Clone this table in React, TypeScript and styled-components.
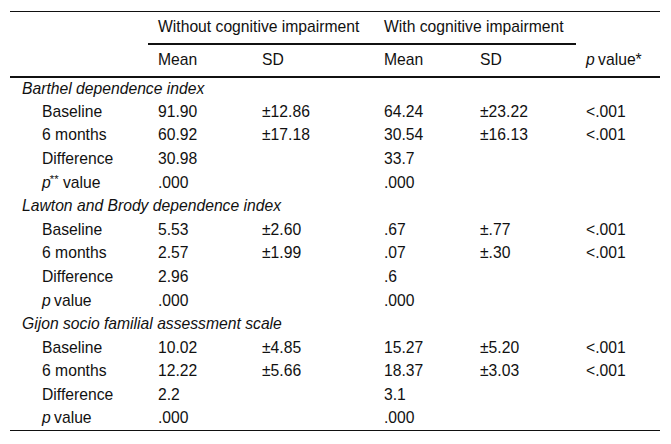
import React from "react";
import styled, { createGlobalStyle } from "styled-components";

const GlobalStyle = createGlobalStyle`
  html, body {
    margin: 0;
    padding: 0;
    background: #fff;
  }
  body {
    font-family: "Liberation Sans", Arial, sans-serif;
    color: #111;
  }
`;

const Page = styled.div`
  padding: 11px 11px 0 10px;
`;

const Table = styled.table`
  width: 650px;
  table-layout: fixed;
  border-collapse: collapse;
  font-size: 15.7px;
  border-top: 1px solid #111;
  border-bottom: 1px solid #111;
`;

const Col = styled.col<{ $width: number }>`
  width: ${(p) => p.$width}px;
`;

const HeadCell = styled.th<{ $underline?: boolean }>`
  font-weight: 400;
  text-align: left;
  padding: 0 0 0 10px;
  white-space: nowrap;
  border-bottom: ${(p) => (p.$underline ? "2px solid #111" : "none")};
`;

const GroupRow = styled.tr`
  height: 32px;
`;

const ColumnRow = styled.tr`
  height: 33px;
  border-bottom: 2px solid #111;
`;

const Row = styled.tr`
  height: 23.6px;
`;

const SectionCell = styled.td`
  font-style: italic;
  padding: 0 0 0 12px;
  white-space: nowrap;
`;

const LabelCell = styled.td`
  padding: 0 0 0 32px;
  white-space: nowrap;
`;

const Cell = styled.td`
  padding: 0 0 0 10px;
  white-space: nowrap;
`;

const Sup = styled.sup`
  font-size: 0.72em;
  vertical-align: 0.45em;
  line-height: 0;
`;

const PLetter = styled.i`
  margin-right: -1px;
`;

type DataRow = {
  label: React.ReactNode;
  values: string[];
};

type Section = {
  title: string;
  rows: DataRow[];
};

const P = () => <PLetter>p</PLetter>;

const pValueLabel = (
  <>
    <P /> value
  </>
);

const sections: Section[] = [
  {
    title: "Barthel dependence index",
    rows: [
      { label: "Baseline", values: ["91.90", "±12.86", "64.24", "±23.22", "<.001"] },
      { label: "6 months", values: ["60.92", "±17.18", "30.54", "±16.13", "<.001"] },
      { label: "Difference", values: ["30.98", "", "33.7", "", ""] },
      {
        label: (
          <>
            <P />
            <Sup>**</Sup> value
          </>
        ),
        values: [".000", "", ".000", "", ""],
      },
    ],
  },
  {
    title: "Lawton and Brody dependence index",
    rows: [
      { label: "Baseline", values: ["5.53", "±2.60", ".67", "±.77", "<.001"] },
      { label: "6 months", values: ["2.57", "±1.99", ".07", "±.30", "<.001"] },
      { label: "Difference", values: ["2.96", "", ".6", "", ""] },
      { label: pValueLabel, values: [".000", "", ".000", "", ""] },
    ],
  },
  {
    title: "Gijon socio familial assessment scale",
    rows: [
      { label: "Baseline", values: ["10.02", "±4.85", "15.27", "±5.20", "<.001"] },
      { label: "6 months", values: ["12.22", "±5.66", "18.37", "±3.03", "<.001"] },
      { label: "Difference", values: ["2.2", "", "3.1", "", ""] },
      { label: pValueLabel, values: [".000", "", ".000", "", ""] },
    ],
  },
];

const widths = [138, 104, 122, 96, 106, 84];

export default function App() {
  return (
    <>
      <GlobalStyle />
      <Page>
        <Table>
          <colgroup>
            {widths.map((w, i) => (
              <Col key={i} $width={w} />
            ))}
          </colgroup>
          <thead>
            <GroupRow>
              <HeadCell />
              <HeadCell colSpan={2} $underline>
                Without cognitive impairment
              </HeadCell>
              <HeadCell colSpan={2} $underline>
                With cognitive impairment
              </HeadCell>
              <HeadCell />
            </GroupRow>
            <ColumnRow>
              <HeadCell />
              <HeadCell>Mean</HeadCell>
              <HeadCell>SD</HeadCell>
              <HeadCell>Mean</HeadCell>
              <HeadCell>SD</HeadCell>
              <HeadCell>
                <P /> value*
              </HeadCell>
            </ColumnRow>
          </thead>
          <tbody>
            {sections.map((section) => (
              <React.Fragment key={section.title}>
                <Row>
                  <SectionCell colSpan={6}>{section.title}</SectionCell>
                </Row>
                {section.rows.map((row, i) => (
                  <Row key={i}>
                    <LabelCell>{row.label}</LabelCell>
                    {row.values.map((v, j) => (
                      <Cell key={j}>{v}</Cell>
                    ))}
                  </Row>
                ))}
              </React.Fragment>
            ))}
          </tbody>
        </Table>
      </Page>
    </>
  );
}
